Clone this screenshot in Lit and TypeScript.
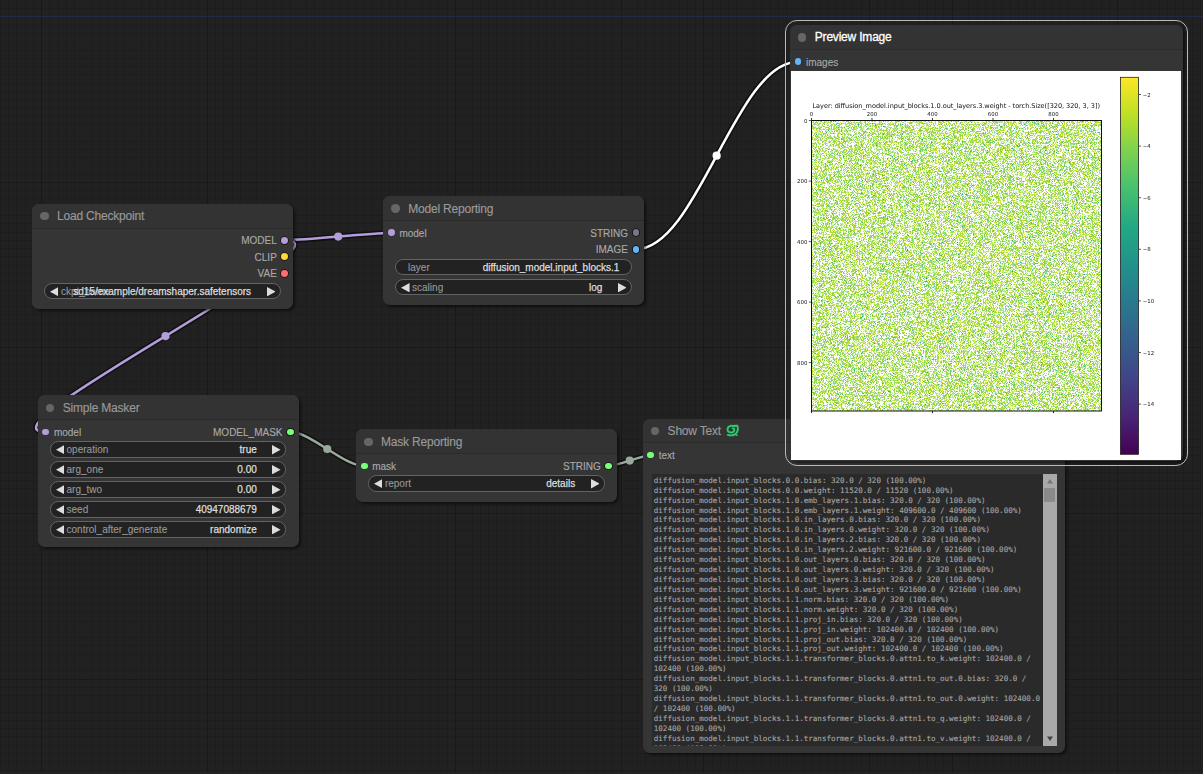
import { LitElement, html, svg, css, nothing } from "lit";
import { customElement, property } from "lit/decorators.js";

interface Slot { name: string; color: string; }
interface Widget { label: string; value: string; plain?: boolean; }
interface NodeSpec {
  title: string; x: number; y: number; w: number; h: number;
  inputs: Slot[]; outputs: Slot[]; widgets: Widget[];
}

const PURPLE = "#b39ddb";
const GREEN = "#7f7";

const NODES: NodeSpec[] = [
  { title: "Load Checkpoint", x: 32, y: 203.7, w: 261, h: 105.3, inputs: [],
    outputs: [{ name: "MODEL", color: PURPLE }, { name: "CLIP", color: "#ffd932" }, { name: "VAE", color: "#ff6e6e" }],
    widgets: [{ label: "ckpt_name", value: "sd15/example/dreamshaper.safetensors" }] },
  { title: "Model Reporting", x: 383.2, y: 196.3, w: 261, h: 108.4,
    inputs: [{ name: "model", color: PURPLE }],
    outputs: [{ name: "STRING", color: "#778" }, { name: "IMAGE", color: "#64b5f6" }],
    widgets: [{ label: "layer", value: "diffusion_model.input_blocks.1", plain: true }, { label: "scaling", value: "log" }] },
  { title: "Simple Masker", x: 37.7, y: 395.4, w: 261, h: 152,
    inputs: [{ name: "model", color: PURPLE }], outputs: [{ name: "MODEL_MASK", color: GREEN }],
    widgets: [
      { label: "operation", value: "true" }, { label: "arg_one", value: "0.00" }, { label: "arg_two", value: "0.00" },
      { label: "seed", value: "40947088679" }, { label: "control_after_generate", value: "randomize" }] },
  { title: "Mask Reporting", x: 356, y: 429.4, w: 261, h: 72.6,
    inputs: [{ name: "mask", color: GREEN }], outputs: [{ name: "STRING", color: GREEN }],
    widgets: [{ label: "report", value: "details" }] },
];

const LINKS = [
  { a: [285, 240.2], b: [391.5, 233], color: PURPLE },
  { a: [285, 240.2], b: [46, 432], color: PURPLE },
  { a: [635.8, 249.3], b: [797.5, 62], color: "#fff" },
  { a: [290.5, 432], b: [364, 466], color: "#9aaa9a" },
  { a: [608.7, 465.7], b: [650.7, 455.5], color: "#9aaa9a" },
];

const P = "diffusion_model.input_blocks.";
const T = P + "1.1.transformer_blocks.0.attn1.";
const LINES = [
  P + "0.0.bias: 320.0 / 320 (100.00%)",
  P + "0.0.weight: 11520.0 / 11520 (100.00%)",
  P + "1.0.emb_layers.1.bias: 320.0 / 320 (100.00%)",
  P + "1.0.emb_layers.1.weight: 409600.0 / 409600 (100.00%)",
  P + "1.0.in_layers.0.bias: 320.0 / 320 (100.00%)",
  P + "1.0.in_layers.0.weight: 320.0 / 320 (100.00%)",
  P + "1.0.in_layers.2.bias: 320.0 / 320 (100.00%)",
  P + "1.0.in_layers.2.weight: 921600.0 / 921600 (100.00%)",
  P + "1.0.out_layers.0.bias: 320.0 / 320 (100.00%)",
  P + "1.0.out_layers.0.weight: 320.0 / 320 (100.00%)",
  P + "1.0.out_layers.3.bias: 320.0 / 320 (100.00%)",
  P + "1.0.out_layers.3.weight: 921600.0 / 921600 (100.00%)",
  P + "1.1.norm.bias: 320.0 / 320 (100.00%)",
  P + "1.1.norm.weight: 320.0 / 320 (100.00%)",
  P + "1.1.proj_in.bias: 320.0 / 320 (100.00%)",
  P + "1.1.proj_in.weight: 102400.0 / 102400 (100.00%)",
  P + "1.1.proj_out.bias: 320.0 / 320 (100.00%)",
  P + "1.1.proj_out.weight: 102400.0 / 102400 (100.00%)",
  T + "to_k.weight: 102400.0 /", "102400 (100.00%)",
  T + "to_out.0.bias: 320.0 /", "320 (100.00%)",
  T + "to_out.0.weight: 102400.0", "/ 102400 (100.00%)",
  T + "to_q.weight: 102400.0 /", "102400 (100.00%)",
  T + "to_v.weight: 102400.0 /", "102400 (100.00%)",
];

const VIRIDIS = ["#440154", "#482475", "#414487", "#355f8d", "#2a788e", "#21918c", "#22a884", "#44bf70", "#7ad151", "#bddf26", "#fde725"];

const nodeStyles = css`
  .node { position: absolute; box-sizing: border-box; display: flex; flex-direction: column; background: #353535;
    border-radius: 6.6px; box-shadow: 2px 2px 3px rgba(0,0,0,.5); font-family: "Liberation Sans", Arial, sans-serif; }
  .title { height: 24.9px; box-sizing: border-box; display: flex; align-items: center; gap: 8.3px; padding: .8px 0 0 8.3px; flex: none;
    background: #333; border-bottom: 1px solid #2b2b2b; border-radius: 6.6px 6.6px 0 0; color: #999; font-size: 12px; letter-spacing: -.2px;
    white-space: nowrap; -webkit-text-stroke: .15px currentColor; }
  .bullet { width: 8.4px; height: 8.4px; border-radius: 50%; background: #666; flex: none; }
  .slots { display: flex; justify-content: space-between; padding: 3.4px 4.8px 0 4.8px; flex: none; }
  .col { display: flex; flex-direction: column; }
  .slot { height: 16.6px; display: flex; align-items: center; gap: 4.6px; color: #aaa; font-size: 10px; white-space: nowrap; -webkit-text-stroke: .12px currentColor; }
  .slot.out { justify-content: flex-end; }
  .pin { width: 6.8px; height: 6.8px; border-radius: 50%; flex: none; }
  .slot.out .pin { box-shadow: 0 0 0 .8px #111; }
  .lbl { padding-top: 1px; }
`;

const slotRow = (s: Slot, out: boolean) => html`<div class="slot ${out ? "out" : ""}">
  ${out ? html`<span class="lbl">${s.name}</span>` : nothing}<span class="pin" style="background:${s.color}"></span>${out ? nothing : html`<span class="lbl">${s.name}</span>`}
</div>`;

@customElement("graph-node")
export class GraphNode extends LitElement {
  @property({ attribute: false }) spec!: NodeSpec;
  static styles = [nodeStyles, css`
    :host { display: contents; }
    .widgets { display: flex; flex-direction: column; gap: 3.3px; padding: 1.1px 12.3px 0 12.3px; }
    .widget { height: 16.6px; box-sizing: border-box; border: 1px solid #636363; border-radius: 8.3px; background: #222;
      display: flex; align-items: center; padding: .5px 4.6px 0 4.6px; font-size: 10px; color: #999; white-space: nowrap; }
    .widget.plain { padding: .5px 11.6px 0; }
    .arrow { width: 8.6px; height: 9.4px; flex: none; fill: #ddd; }
    .name { margin-left: 2.4px; width: 0; flex: none; overflow: visible; -webkit-text-stroke: .1px #999; }
    .plain .name { margin-left: 0; }
    .value { flex: 1; text-align: right; color: #ddd; -webkit-text-stroke: .25px #ddd; padding-right: 15.4px; }
    .plain .value { padding-right: 0; }
  `];
  render() {
    const n = this.spec;
    return html`<div class="node" style="left:${n.x}px;top:${n.y}px;width:${n.w}px;height:${n.h}px">
      <div class="title"><span class="bullet"></span><span>${n.title}</span></div>
      <div class="slots">
        <div class="col">${n.inputs.map((s) => slotRow(s, false))}</div>
        <div class="col">${n.outputs.map((s) => slotRow(s, true))}</div>
      </div>
      <div class="widgets">${n.widgets.map((w) => html`<div class="widget ${w.plain ? "plain" : ""}">
        ${w.plain ? nothing : html`<svg class="arrow" viewBox="0 0 8.6 9.4"><path d="M8.6 0V9.4L0 4.7Z"/></svg>`}
        <span class="name">${w.label}</span><span class="value">${w.value}</span>
        ${w.plain ? nothing : html`<svg class="arrow" viewBox="0 0 8.6 9.4"><path d="M0 0V9.4L8.6 4.7Z"/></svg>`}
      </div>`)}</div>
    </div>`;
  }
}

@customElement("text-node")
export class TextNode extends LitElement {
  static styles = [nodeStyles, css`
    :host { display: contents; }
    .node { left: 642.6px; top: 418.5px; width: 422.4px; height: 334.5px; }
    .snake { width: 13px; height: 13px; margin-left: -3px; }
    .area { margin: 10.8px 8.3px 0 9.4px; height: 272px; display: flex; background: #2a2a2a; overflow: hidden; }
    .text { flex: 1; min-width: 0; overflow: hidden; padding: 1.6px 0 0 1.8px; font-family: "DejaVu Sans Mono", monospace; font-size: 7.56px;
      line-height: 9.923px; color: #a6a6a6; white-space: pre; -webkit-text-stroke: .1px #a6a6a6; }
    .scroll { width: 13.7px; flex: none; background: #a9a9a9; display: flex; flex-direction: column; align-items: center; justify-content: space-between; }
    .tri { width: 6px; height: 14px; flex: none; }
    .thumb { width: 11px; height: 14px; background: #8a8a8a; }
    .grow { flex: 1; }
  `];
  render() {
    return html`<div class="node">
      <div class="title"><span class="bullet"></span><span>Show Text</span>
        <svg class="snake" viewBox="0 0 13 13" fill="none" stroke="#2ecc71" stroke-width="1.9" stroke-linecap="round">
          <path d="M8.3 2.3C5.2 .9 1.6 2.2 1.5 5.4C1.5 8.2 4.8 9.2 6.9 8.1C9.2 6.9 8.6 4.3 6.6 4.4"/>
          <path d="M8.4 1.7H11.2C12.4 4.6 12 8.6 8.9 10.3C6.8 11.5 4.2 11.6 1.8 10.9"/>
          <path d="M9.4 10.4L11.2 11.4" stroke-width="1.3"/>
        </svg></div>
      <div class="slots"><div class="col">${slotRow({ name: "text", color: GREEN }, false)}</div></div>
      <div class="area">
        <div class="text">${LINES.map((l) => html`<div>${l}</div>`)}</div>
        <div class="scroll">
          <svg class="tri" viewBox="0 0 6 14"><path d="M0 9.4H6L3 5Z" fill="#777"/></svg>
          <div class="thumb"></div><div class="grow"></div>
          <svg class="tri" viewBox="0 0 6 14"><path d="M0 4.6H6L3 9Z" fill="#444"/></svg>
        </div>
      </div>
    </div>`;
  }
}

@customElement("preview-node")
export class PreviewNode extends LitElement {
  static styles = [nodeStyles, css`
    :host { display: contents; }
    .node { left: 789.8px; top: 25px; width: 393.2px; height: 435.7px; }
    .ring { position: absolute; inset: -5px -5px -5.2px; border: 1.4px solid #b9b9b9; border-radius: 12px; }
    .title { color: #fff; -webkit-text-stroke: .3px #fff; }
    .figure { position: relative; margin: 1.3px 2.4px 0 1.2px; height: 389px; background: #fff; display: flex; }
    .plot { width: 389.6px; height: 389px; font-family: "DejaVu Sans", sans-serif; font-size: 5.4px; fill: #111; }
    canvas { position: absolute; left: 20px; top: 49px; width: 291px; height: 291px; }
    .frame { position: absolute; left: 0; top: 0; }
  `];
  firstUpdated() {
    const cv = this.renderRoot.querySelector("canvas") as HTMLCanvasElement;
    const ctx = cv.getContext("2d")!;
    const im = ctx.createImageData(291, 291);
    let s = 20731;
    const rnd = () => { s |= 0; s = (s + 0x6d2b79f5) | 0; let t = Math.imul(s ^ (s >>> 15), 1 | s);
      t = (t + Math.imul(t ^ (t >>> 7), 61 | t)) ^ t; return ((t ^ (t >>> 14)) >>> 0) / 4294967296; };
    const rgb = VIRIDIS.map((h) => [1, 3, 5].map((i) => parseInt(h.slice(i, i + 2), 16)));
    for (let i = 0; i < 291 * 291; i++) {
      let c = [255, 255, 255];
      if (rnd() > 0.37) {
        const v = Math.max(0.15, Math.min(0.93, 0.87 + 0.055 * Math.log(Math.max(rnd(), 1e-6)) + 0.05 * rnd())) * 10;
        const k = Math.floor(v), f = v - k, m = rnd() < 0.4 ? 0.3 + rnd() * 0.4 : 0.05;
        c = rgb[k].map((a, j) => { const q = a + (rgb[k + 1][j] - a) * f; return q + (255 - q) * m; });
      }
      im.data.set([c[0], c[1], c[2], 255], i * 4);
    }
    ctx.putImageData(im, 0, 0);
  }
  render() {
    const t = [0, 1, 2, 3, 4];
    return html`<div class="node">
      <div class="ring"></div>
      <div class="title"><span class="bullet"></span><span>Preview Image</span></div>
      <div class="slots"><div class="col">${slotRow({ name: "images", color: "#64b5f6" }, false)}</div></div>
      <div class="figure">
        <canvas width="291" height="291"></canvas>
        <svg class="plot frame" viewBox="791 71.2 389.6 389">
          <defs><linearGradient id="v" x1="0" y1="1" x2="0" y2="0">${VIRIDIS.map((c, i) => svg`<stop offset=${i / 10} stop-color=${c}></stop>`)}</linearGradient></defs>
          <text x="812.5" y="108" font-size="6.55" textLength="287.5">Layer: diffusion_model.input_blocks.1.0.out_layers.3.weight - torch.Size([320, 320, 3, 3])</text>
          <rect x="811.5" y="120.7" width="290" height="290.5" fill="none" stroke="#111" stroke-width="1"></rect>
          ${t.map((i) => svg`
            <text x=${811.5 + i * 60.5} y="116" text-anchor="middle">${i * 200}</text>
            <path d="M${811.5 + i * 60.5} 118.2V120.5" stroke="#111" stroke-width=".8"></path>
            <path d="M${811.5 + i * 60.5} 411V413.3" stroke="#111" stroke-width=${i % 2 ? 0.1 : 0.9}></path>
            <text x="807.4" y=${122.9 + i * 60.5} text-anchor="end">${i * 200}</text>
            <path d="M808.8 ${120.8 + i * 60.5}H811" stroke="#111" stroke-width=".7"></path>`)}
          <rect x="1120.4" y="77.5" width="18.2" height="377" fill="url(#v)" stroke="#222" stroke-width=".8"></rect>
          ${[2, 4, 6, 8, 10, 12, 14].map((n, i) => svg`
            <path d="M1139 ${94.7 + i * 51.6}H1141" stroke="#111" stroke-width=".7"></path>
            <text x="1142.8" y=${96.9 + i * 51.6}>−${n}</text>`)}
        </svg>
      </div>
    </div>`;
  }
}

@customElement("app-root")
export class AppRoot extends LitElement {
  static styles = css`
    :host { display: block; position: relative; width: 1203px; height: 774px; overflow: hidden; background: #212121; }
    .board { position: absolute; inset: 0; width: 1203px; height: 774px; }
  `;
  private grid() {
    const p = 8.277;
    const out = [];
    for (let i = -5; i < 142; i++) {
      if ([5, 11].includes(((i % 20) + 20) % 20)) continue;
      const x = Math.round(41.2 + i * p);
      const major = [0, 20, 50, 70, 80, 100, 110, 130].includes(i);
      out.push(svg`<rect x=${x} y="0" width="1" height="774" fill=${major ? "#181818" : "#1d1d1d"}></rect>`);
    }
    for (let i = -2; i < 93; i++) {
      if ([3, 14, 18].includes(((i % 20) + 20) % 20)) continue;
      const y = Math.round(16.4 + i * p);
      out.push(svg`<rect x="0" y=${y} width="1203" height="1" fill=${i % 20 === 0 ? "#191919" : "#1d1d1d"}></rect>`);
    }
    return out;
  }
  render() {
    return html`
      <svg class="board" viewBox="0 0 1203 774">
        ${this.grid()}
        <rect x="0" y="16" width="1203" height="1" fill="#232b44"></rect>
        <rect x="0" y="773" width="1203" height="1" fill="#2e2226"></rect>
        ${LINKS.map(({ a, b, color }) => {
          const d = Math.hypot(b[0] - a[0], b[1] - a[1]) * 0.25;
          const path = `M${a[0]} ${a[1]}C${a[0] + d} ${a[1]} ${b[0] - d} ${b[1]} ${b[0]} ${b[1]}`;
          return svg`<path d=${path} fill="none" stroke="#000" stroke-opacity=".5" stroke-width="5.6"></path>
            <path d=${path} fill="none" stroke=${color} stroke-width="2.5"></path>
            <circle cx=${(a[0] + b[0]) / 2} cy=${(a[1] + b[1]) / 2} r="4.1" fill=${color}></circle>`;
        })}
      </svg>
      ${NODES.map((n) => html`<graph-node .spec=${n}></graph-node>`)}
      <text-node></text-node>
      <preview-node></preview-node>`;
  }
}
